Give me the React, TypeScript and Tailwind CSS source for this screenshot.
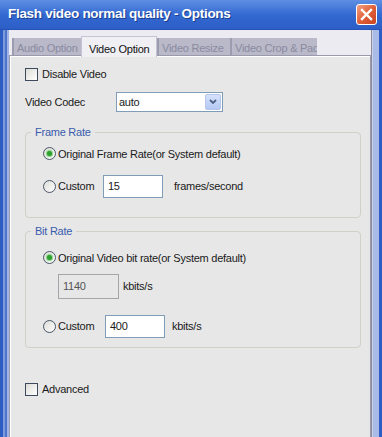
import React from 'react';

function Check({ label }: { label: string }) {
  return (
    <div className="flex items-center h-[13px]">
      <span className="w-[13px] h-[13px] border border-[#3c4a5c] bg-gradient-to-br from-[#dcdcd7] to-[#ffffff]" />
      <span className="ml-[4px]">{label}</span>
    </div>
  );
}

function Radio({ checked, label }: { checked?: boolean; label: string }) {
  return (
    <div className="flex items-center">
      <span className="w-[13px] h-[13px] rounded-full border border-[#4a5568] bg-gradient-to-br from-[#dcdcd7] to-[#ffffff] flex items-center justify-center">
        {checked && <span className="w-[5px] h-[5px] rounded-full bg-[#2ea12e] shadow-[0_0_1px_1px_#7fd07f]" />}
      </span>
      <span className="ml-[2px]">{label}</span>
    </div>
  );
}

function Tab({ label, width, active }: { label: string; width: string; active?: boolean }) {
  if (active) {
    return (
      <div className={`${width} h-[21px] -mb-px relative z-10 pl-[7px] pt-[4px] bg-[#efeff4] border-t border-x border-[#c4c4d4] text-[#111] whitespace-nowrap`}>
        {label}
      </div>
    );
  }
  return (
    <div className={`${width} h-[18px] pl-[3px] pt-[2px] bg-[#b9b9c9] border-l-2 border-[#9c9cb0] text-[#8a8aa0] overflow-hidden whitespace-nowrap`}>
      {label}
    </div>
  );
}

export default function App() {
  return (
    <div className="w-[382px] h-[437px] overflow-hidden flex flex-col font-['Liberation_Sans',Arial,sans-serif] text-[11px] tracking-[-0.25px] text-[#1a1a1a]">
      {/* title bar */}
      <div className="h-[30px] shrink-0 flex items-center justify-between pl-[8px] pr-[5px] bg-gradient-to-b from-[#5f8fe2] via-[#3469d2] to-[#2c5ec6] border-b border-[#2552b8]">
        <span className="text-white font-bold text-[13.5px] tracking-[-0.3px] [text-shadow:1px_1px_0_#1a3f8f]">
          Flash video normal quality - Options
        </span>
        <div className="w-[21px] h-[21px] rounded-[3px] border border-white bg-gradient-to-br from-[#f0a080] via-[#e0603a] to-[#c84420] flex items-center justify-center">
          <svg width="13" height="13" viewBox="0 0 13 13">
            <path d="M2 2 L11 11 M11 2 L2 11" stroke="white" strokeWidth="2.4" strokeLinecap="square" />
          </svg>
        </div>
      </div>

      <div className="flex-1 flex min-h-0">
        {/* left frame */}
        <div className="w-[3px] bg-[#2d5cc2]" />
        <div className="w-[2px] bg-[#7e9ad8]" />
        <div className="w-[2px] bg-[#4c74cc]" />
        <div className="w-[2px] bg-[#9fb4e4]" />

        <div className="flex-1 flex flex-col bg-[#ecebf2] pl-[1px] pt-[7px] min-w-0">
          {/* tabs */}
          <div className="flex items-end h-[19px] pl-[2px]">
            <Tab label="Audio Option" width="w-[69px]" />
            <Tab label="Video Option" width="w-[76px]" active />
            <Tab label="Video Resize" width="w-[73px]" />
            <Tab label="Video Crop & Pac" width="w-[87px]" />
          </div>

          {/* panel */}
          <div className="flex-1 border-t border-l border-[#ffffff] outline outline-1 outline-[#9a9aac] bg-[#e7e7e7] pl-[14px] pr-[11px] pt-[11px] mr-[1px]">
            <Check label="Disable Video" />

            <div className="flex items-center mt-[11px]">
              <span className="w-[91px]">Video Codec</span>
              <div className="w-[107px] h-[20px] border border-[#7f9db9] bg-white flex items-center">
                <span className="flex-1 pl-[2px]">auto</span>
                <div className="w-[16px] h-[16px] mr-[1px] rounded-[2px] bg-gradient-to-b from-[#d6e2fc] to-[#b4c8f4] border border-[#b4c6ea] flex items-center justify-center">
                  <svg width="8" height="6" viewBox="0 0 8 6">
                    <path d="M1 1 L4 4 L7 1" stroke="#4d6185" strokeWidth="1.8" fill="none" />
                  </svg>
                </div>
              </div>
            </div>

            <fieldset className="mt-[12px] w-[336px] h-[94px] border border-[#d0d0c8] rounded-[4px]">
              <legend className="ml-[5px] px-[4px] text-[#3a5cad]">Frame Rate</legend>
              <div className="pl-[17px]">
                <div className="mt-[5px]">
                  <Radio checked label="Original Frame Rate(or System default)" />
                </div>
                <div className="flex items-center mt-[13px]">
                  <div className="w-[60px]">
                    <Radio label="Custom" />
                  </div>
                  <div className="w-[60px] h-[23px] border border-[#7f9db9] bg-white flex items-center pl-[4px]">15</div>
                  <span className="ml-[11px]">frames/second</span>
                </div>
              </div>
            </fieldset>

            <fieldset className="mt-[5px] w-[336px] h-[125px] border border-[#d0d0c8] rounded-[4px]">
              <legend className="ml-[5px] px-[4px] text-[#3a5cad]">Bit Rate</legend>
              <div className="pl-[17px]">
                <div className="mt-[10px]">
                  <Radio checked label="Original Video bit rate(or System default)" />
                </div>
                <div className="flex items-center mt-[8px] ml-[15px]">
                  <div className="w-[61px] h-[25px] border border-[#a5a5a5] bg-[#e7e7e7] text-[#555] flex items-center pl-[4px]">1140</div>
                  <span className="ml-[4px]">kbits/s</span>
                </div>
                <div className="flex items-center mt-[16px]">
                  <div className="w-[62px]">
                    <Radio label="Custom" />
                  </div>
                  <div className="w-[60px] h-[23px] border border-[#7f9db9] bg-white flex items-center pl-[4px]">400</div>
                  <span className="ml-[7px]">kbits/s</span>
                </div>
              </div>
            </fieldset>

            <div className="mt-[35px]">
              <Check label="Advanced" />
            </div>
          </div>
        </div>

        {/* right frame */}
        <div className="w-[1px] bg-[#8c8c9c]" />
        <div className="w-[1px] bg-[#c8d2ec]" />
        <div className="w-[6px] bg-[#a9bbe6]" />
        <div className="w-[3px] bg-[#2d5cc2]" />
      </div>
    </div>
  );
}
